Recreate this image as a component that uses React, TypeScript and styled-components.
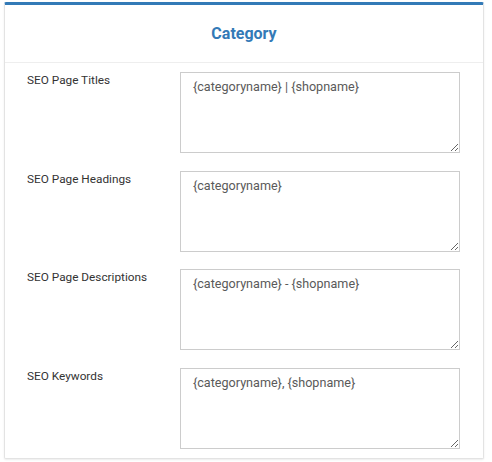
import styled, { createGlobalStyle } from 'styled-components'

const Global = createGlobalStyle`
  body {
    margin: 0;
    background: #fff;
    font-family: Roboto, "Liberation Sans", Arial, sans-serif;
  }
`

const Page = styled.div`
  padding: 2px 8px 5px 4px;
`

const Panel = styled.div`
  width: 480px;
  box-sizing: border-box;
  background: #fff;
  border: 1px solid #e3e3e3;
  border-top: 3px solid #337ab7;
  border-radius: 2px;
  box-shadow: 0 1px 2px rgba(0, 0, 0, 0.08);
`

const Header = styled.div`
  height: 57px;
  display: flex;
  align-items: center;
  justify-content: center;
  border-bottom: 1px solid #eee;
`

const Title = styled.h3`
  margin: 0;
  font-size: 16px;
  font-weight: 700;
  color: #337ab7;
`

const Body = styled.div`
  padding: 9px 23px 9px 22px;
  display: flex;
  flex-direction: column;
  gap: 17.6px;
`

const Row = styled.div`
  display: grid;
  grid-template-columns: 153px 280px;
`

const Label = styled.label`
  font-size: 11.8px;
  color: #333;
  padding-top: 1px;
`

const Area = styled.textarea`
  display: block;
  width: 280px;
  height: 81px;
  box-sizing: border-box;
  border: 1px solid #ccc;
  border-radius: 0;
  padding: 5px 12px;
  font-family: Roboto, "Liberation Sans", Arial, sans-serif;
  font-size: 12.6px;
  line-height: 18px;
  color: #5a5a5a;
  outline: none;
  resize: vertical;
`

const fields = [
  { label: 'SEO Page Titles', value: '{categoryname} | {shopname}' },
  { label: 'SEO Page Headings', value: '{categoryname}' },
  { label: 'SEO Page Descriptions', value: '{categoryname} - {shopname}' },
  { label: 'SEO Keywords', value: '{categoryname}, {shopname}' },
]

export default function App() {
  return (
    <Page>
      <Global />
      <Panel>
        <Header>
          <Title>Category</Title>
        </Header>
        <Body>
          {fields.map((f) => (
            <Row key={f.label}>
              <Label>{f.label}</Label>
              <Area defaultValue={f.value} />
            </Row>
          ))}
        </Body>
      </Panel>
    </Page>
  )
}
